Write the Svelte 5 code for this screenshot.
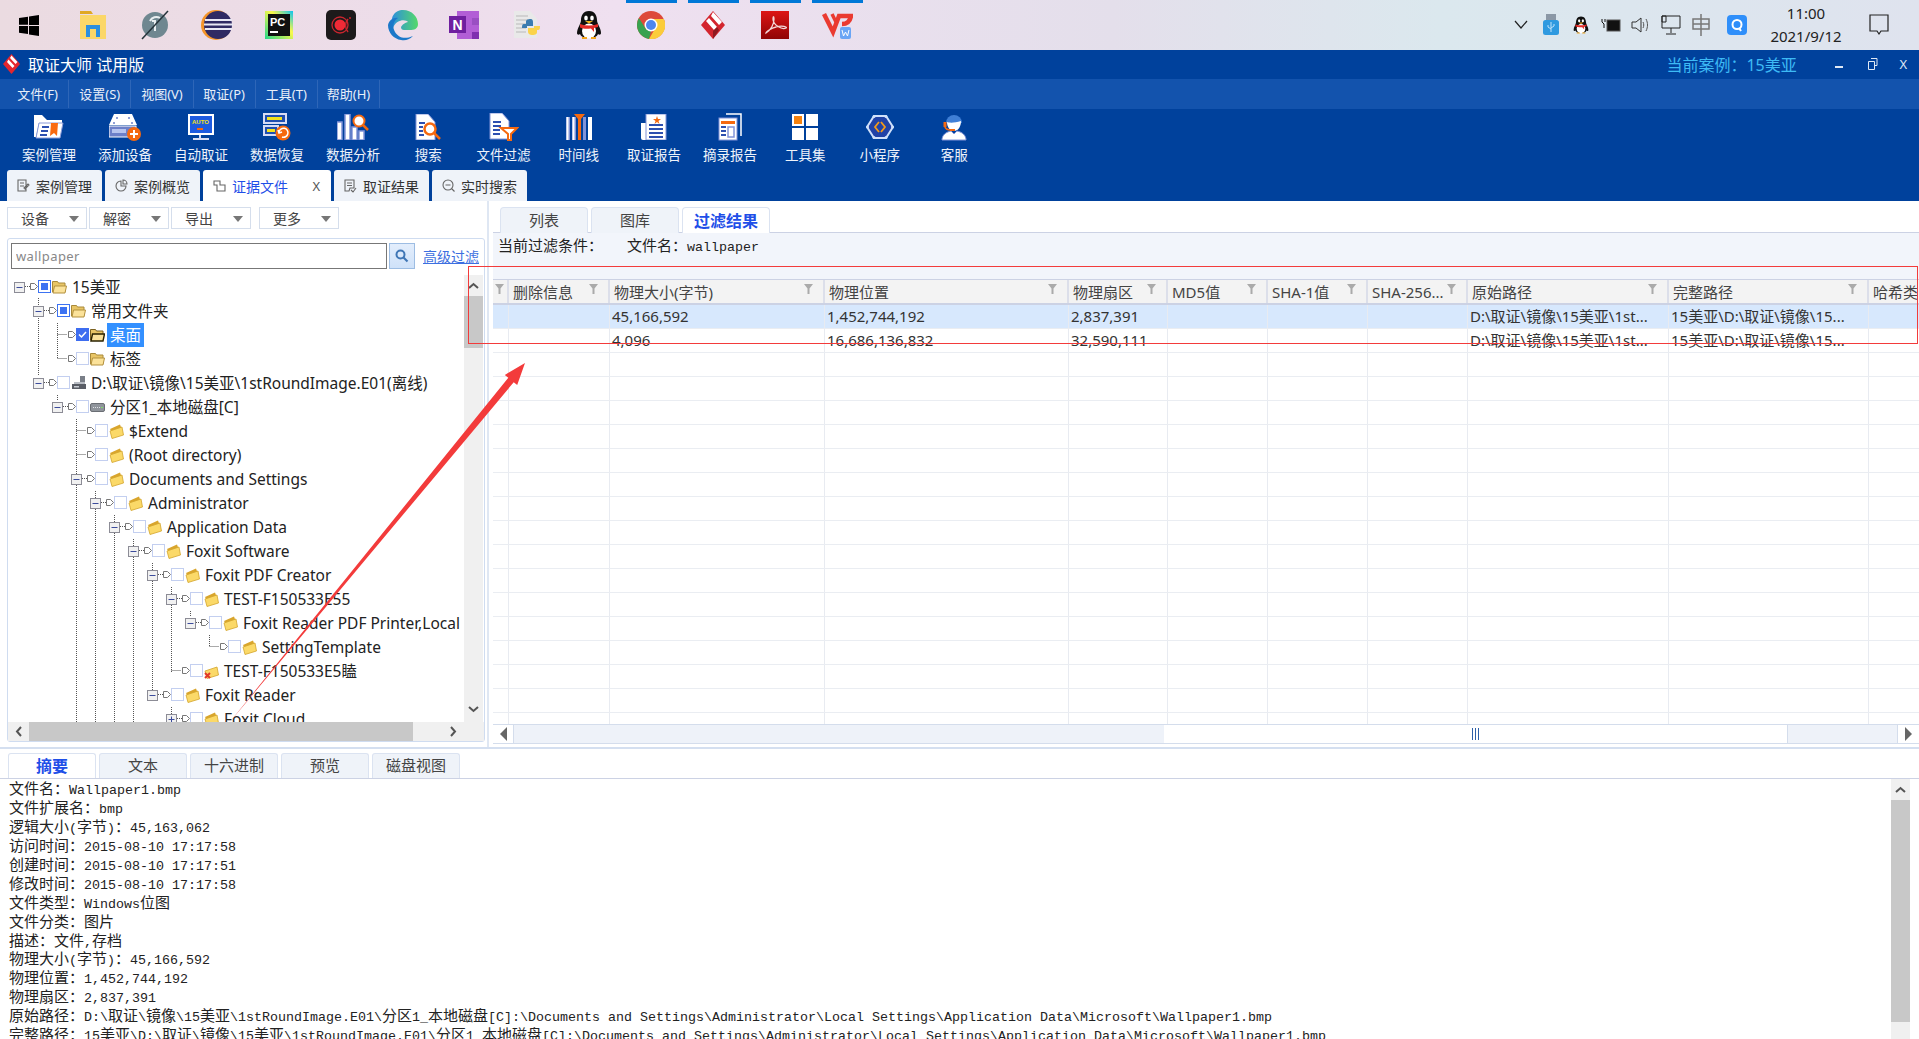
<script>
  const task = [
    { id: 'win' }, { id: 'files' }, { id: 'sync' }, { id: 'eclipse' }, { id: 'pc' }, { id: 'rec' }, { id: 'edge' },
    { id: 'note' }, { id: 'py' }, { id: 'qq' }, { id: 'chrome', run: true }, { id: 'fm', run: true }, { id: 'acro', run: true }, { id: 'wps', run: true }
  ];
  const icons = {
    win: `<svg width="22" height="22" viewBox="0 0 22 22"><path fill="#000" d="M1 4l9-1.300v8H1zM11 2.600L21 1v10H11zM1 12h9v8L1 18.700zM11 12h10v10l-10-1.500z"/></svg>`,
    files: `<svg width="30" height="30" viewBox="0 0 30 30"><path fill="#e0a824" d="M2 1h11l2 3H2z"/><path fill="#fbd768" d="M2 5h26v24H2z"/><path fill="#2b8fe0" d="M8 27V15h14v12h-4v-8h-6v8z"/></svg>`,
    sync: `<svg width="34" height="34" viewBox="0 0 34 34"><circle cx="17" cy="17" r="13" fill="#6f8790"/><path d="M14 13h3v10M12 13a7 7 0 0 1 10-3" fill="none" stroke="#e8eef0" stroke-width="2"/><path d="M4 31L30 3" stroke="#25333a" stroke-width="1.500"/></svg>`,
    eclipse: `<svg width="32" height="32" viewBox="0 0 32 32"><circle cx="15" cy="16" r="15" fill="#f4952a"/><circle cx="17" cy="16" r="14" fill="#2f2a63"/><path d="M4 11h27M3 15.500h29M4 20h27" stroke="#e8e8f4" stroke-width="2"/></svg>`,
    pc: `<svg width="30" height="30" viewBox="0 0 30 30"><defs><linearGradient id="pcg" x1="0" y1="1" x2="1" y2="0"><stop offset="0" stop-color="#21d789"/><stop offset=".6" stop-color="#fcf84a"/><stop offset="1" stop-color="#07c3f2"/></linearGradient></defs><rect width="28" height="28" x="1" y="1" fill="url(#pcg)"/><rect x="4" y="4" width="22" height="22" fill="#111"/><text x="6" y="16" font-family="Liberation Sans" font-size="11" font-weight="700" fill="#fff">PC</text><rect x="6" y="21" width="8" height="2" fill="#fff"/></svg>`,
    rec: `<svg width="30" height="30" viewBox="0 0 30 30"><rect width="30" height="30" rx="5" fill="#1c1a1b"/><circle cx="14" cy="15" r="5.500" fill="#f02a36"/><circle cx="14" cy="15" r="8" fill="none" stroke="#c9252e" stroke-width="1.300"/><path d="M22 9c-3 4-3 9 0 13" fill="none" stroke="#c9252e" stroke-width="1.500"/><circle cx="24" cy="8" r="1" fill="#c9252e"/></svg>`,
    edge: `<svg width="32" height="32" viewBox="0 0 32 32"><defs><linearGradient id="edg" x1="0" y1="0" x2="1" y2="0"><stop offset="0" stop-color="#2d8fdc"/><stop offset="1" stop-color="#55d96a"/></linearGradient></defs><path fill="url(#edg)" d="M16 1c9 0 15 7 15 14 0 5-4 6-8 6h-6c-2 0-3-1-3-3 2-4 7-5 7-5-2-3-12-3-15 6C2 8 8 1 16 1z"/><path fill="#1b78c9" d="M1 16c1-5 6-8 10-7-5 3-6 9-3 14 3 5 9 8 18 4-4 4-8 5-12 4C7 30 1 24 1 16z"/></svg>`,
    note: `<svg width="32" height="30" viewBox="0 0 32 30"><path fill="#b25ed6" d="M8 1h22v28H8z"/><path fill="#9a4fc2" d="M23 8h7v7h-7z"/><path fill="#7f2fb0" d="M23 22h7v7h-7z"/><rect y="6" x="0" width="17" height="17" fill="#6f1f9f"/><text x="3.500" y="20" font-family="Liberation Sans" font-size="14" font-weight="700" fill="#fff">N</text></svg>`,
    py: `<svg width="30" height="30" viewBox="0 0 30 30"><path fill="#e9e9e9" d="M2 1h16l7 8v19H2z"/><path d="M4 6h12M4 10h12M4 14h10M4 18h10M4 22h10" stroke="#c9c9c9" stroke-width="1.500"/><path fill="#3b7cb0" d="M19 9c-4 0-5 1-5 3v2h-2c-2 0-2 2-2 4h5v-2h6v-4c0-2-1-3-2-3z"/><path fill="#fbd34a" d="M20 25c4 0 5-1 5-3v-2h1c2 0 2-2 2-4h-6v2h-6v4c0 2 2 3 4 3z"/></svg>`,
    qq: `<svg width="26" height="30" viewBox="0 0 26 30"><path fill="#101010" d="M13 1c6 0 8 5 8 9 0 4 4 8 4 13 0 2-2 2-3 1-1 3-5 4-9 4s-8-1-9-4c-1 1-3 1-3-1 0-5 4-9 4-13 0-4 2-9 8-9z"/><ellipse cx="13" cy="21" rx="7" ry="7.500" fill="#fff"/><ellipse cx="10" cy="8" rx="1.800" ry="2.500" fill="#fff"/><ellipse cx="16" cy="8" rx="1.800" ry="2.500" fill="#fff"/><path fill="#f2b21c" d="M9 11h8l-4 2.500z"/><path fill="#e32a26" d="M4 14c6 2 12 2 18 0v3l-4 1v4l-3-3.500c-4 .5-8 .5-11-1z"/><path fill="#f2a51c" d="M6 27h5v2H6zM15 27h5v2h-5z"/></svg>`,
    chrome: `<svg width="28" height="28" viewBox="0 0 28 28"><circle cx="14" cy="14" r="14" fill="#dd4a3a"/><path fill="#fbcc3a" d="M14 8h12.800A14 14 0 0 1 12 27.900L19 16z"/><path fill="#38a24f" d="M1.900 7L8.800 18 14 20 12 27.900A14 14 0 0 1 1.900 7z"/><circle cx="14" cy="14" r="6.500" fill="#fff"/><circle cx="14" cy="14" r="5" fill="#4d86ee"/></svg>`,
    fm: `<svg width="26" height="30" viewBox="0 0 26 30"><path fill="#d3252e" d="M13 1l12 14-12 14L1 15z"/><path fill="#fff" d="M13 2l9 10-3 3-8-9zM9 8l8 9-3 3-8-9z"/><path fill="#8e1a20" d="M13 29V21l4-4 2 3z"/></svg>`,
    acro: `<svg width="30" height="30" viewBox="0 0 30 30"><defs><linearGradient id="acg" x1="0" y1="0" x2="0" y2="1"><stop offset="0" stop-color="#dd1515"/><stop offset="1" stop-color="#8f0505"/></linearGradient></defs><rect x="1" y="1" width="28" height="28" fill="url(#acg)"/><path d="M6 23c5-3 8-9 8-14 0-3-1-3-1 0 0 6 9 11 13 9 2-1-4-3-10-1-5 1-10 5-10 6z" fill="none" stroke="#f4d9d9" stroke-width="1.300"/></svg>`,
    wps: `<svg width="32" height="28" viewBox="0 0 32 28"><path fill="none" stroke="#ea3a30" stroke-width="4.500" d="M3 3l9 18 6-16h12c-1 6-5 8-9 8"/><path fill="none" stroke="#ea3a30" stroke-width="3.500" d="M11 3l4 8"/><rect x="19" y="16" width="11" height="12" rx="2" fill="#6aa5f5"/><path d="M21 19l1.500 6 2-4 2 4 1.500-6" fill="none" stroke="#fff" stroke-width="1"/></svg>`,

    case: `<svg width="30" height="26" viewBox="0 0 30 26"><path fill="#fff" d="M0 1h8l5 5h15v3H5L2 23H0z"/><path fill="#fff" stroke="#8a9ad8" d="M5 9h24l-3 15H2z"/><path d="M8 13h7M7 17h7M6 21h7" stroke="#2d4fb0" stroke-width="2"/><path fill="#f96a10" d="M17 9h7l-1 13-3-3-4 3z"/></svg>`,
    add: `<svg width="32" height="28" viewBox="0 0 32 28"><path fill="#fff" d="M5 1h18l5 11H0z"/><circle cx="8" cy="5" r="1" fill="#6d80c8"/><circle cx="20" cy="5" r="1" fill="#6d80c8"/><circle cx="5" cy="10" r="1" fill="#6d80c8"/><circle cx="23" cy="10" r="1" fill="#6d80c8"/><rect x="0" y="13" width="27" height="11" fill="#6d80c8" stroke="#fff"/><rect x="3" y="16" width="14" height="4" fill="#b7c4ee"/><circle cx="25" cy="21" r="7" fill="#f5690f"/><path d="M21 21h8M25 17v8" stroke="#fff" stroke-width="2"/></svg>`,
    auto: `<svg width="28" height="28" viewBox="0 0 28 28"><rect x="1" y="1" width="26" height="21" fill="#fff"/><rect x="3" y="3" width="22" height="17" fill="#1d5be0"/><text x="5" y="11" font-family="Liberation Sans" font-size="6" font-weight="700" fill="#f3e21c">AUTO</text><rect x="10" y="15" width="6" height="2" fill="#f5690f"/><path d="M13 22v3M6 26h16" stroke="#d8def5" stroke-width="2"/></svg>`,
    restore: `<svg width="28" height="28" viewBox="0 0 28 28"><rect x="1" y="1" width="22" height="9" fill="#1f4fb0" stroke="#d6dcf5" stroke-width="2"/><rect x="4" y="4" width="15" height="3" fill="#f3e21c"/><rect x="1" y="13" width="14" height="9" fill="#1f4fb0" stroke="#d6dcf5" stroke-width="2"/><rect x="4" y="16" width="8" height="3" fill="#f3e21c"/><circle cx="20" cy="20" r="7.500" fill="#f5690f"/><path d="M16 19a4.500 4.500 0 1 1 3 5M15 17l1 3 3-1" fill="none" stroke="#fff" stroke-width="1.500"/></svg>`,
    analyze: `<svg width="32" height="26" viewBox="0 0 32 26"><rect x="0" y="8" width="5" height="18" fill="#fff" stroke="#8294d8" stroke-width="1.500"/><rect x="8" y="0" width="5" height="26" fill="#fff" stroke="#8294d8" stroke-width="1.500"/><rect x="15" y="13" width="5" height="13" fill="#fff" stroke="#8294d8" stroke-width="1.500"/><rect x="22" y="17" width="5" height="9" fill="#fff" stroke="#8294d8" stroke-width="1.500"/><circle cx="22" cy="7" r="5.500" fill="#fff" stroke="#f5690f" stroke-width="2"/><path d="M26 11l5 5" stroke="#f5690f" stroke-width="2.500"/></svg>`,
    search: `<svg width="26" height="26" viewBox="0 0 26 26"><path fill="#fff" stroke="#8294d8" d="M1 0h12l7 8v18H1z"/><path d="M4 9h6M4 13h4M4 17h4M4 21h5" stroke="#2d4fb0" stroke-width="2"/><circle cx="15" cy="15" r="5.500" fill="#fff" stroke="#f5690f" stroke-width="2.500"/><path d="M19 19l6 6" stroke="#f5690f" stroke-width="2.500"/></svg>`,
    filter: `<svg width="30" height="28" viewBox="0 0 30 28"><path fill="#fff" stroke="#8294d8" d="M1 0h12l7 8v18H1z"/><path d="M4 9h8M4 13h8M4 17h7M4 21h7" stroke="#2d4fb0" stroke-width="2"/><path fill="#fff" stroke="#f5690f" stroke-width="2" d="M12 15h16l-6 6v6h-3v-6z"/></svg>`,
    time: `<svg width="26" height="26" viewBox="0 0 26 26"><rect x="0" y="3" width="4" height="23" fill="#8294d8"/><rect x="0.500" y="3" width="2" height="23" fill="#fff"/><rect x="6" y="3" width="4" height="23" fill="#8294d8"/><rect x="6.500" y="3" width="2" height="23" fill="#fff"/><rect x="12" y="5" width="3" height="21" fill="#8294d8"/><rect x="17" y="3" width="3" height="23" fill="#8294d8"/><rect x="22" y="3" width="4" height="23" fill="#fff"/><path fill="#f5690f" d="M8 0h11l-4 5v21h-3V5z"/></svg>`,
    report: `<svg width="26" height="26" viewBox="0 0 26 26"><path fill="#fff" d="M0 9h5v17H2a2 2 0 0 1-2-2z"/><rect x="5" y="0" width="20" height="26" fill="#fff" stroke="#8294d8"/><path fill="#f5690f" d="M16 2l1 3h3l-2.500 2 1 3-2.500-2-2.500 2 1-3L12 5h3z"/><path d="M8 11h14M8 15h14M8 19h14M8 23h14" stroke="#2d4fb0" stroke-width="1.800"/></svg>`,
    extract: `<svg width="24" height="28" viewBox="0 0 24 28"><path d="M8 1h15v22" fill="none" stroke="#fff" stroke-width="1.500"/><rect x="1" y="5" width="18" height="22" fill="#fff" stroke="#8294d8"/><rect x="3" y="8" width="14" height="3" fill="#f5690f"/><path d="M3 14h5M3 18h5M3 22h5" stroke="#2d4fb0" stroke-width="2"/><rect x="10" y="14" width="6" height="10" fill="none" stroke="#8294d8" stroke-width="1.500"/></svg>`,
    tools: `<svg width="26" height="26" viewBox="0 0 26 26"><rect x="0" y="0" width="12" height="12" fill="#fff"/><rect x="2" y="2" width="8" height="8" fill="#f5820f"/><rect x="14" y="0" width="12" height="12" fill="#fff"/><rect x="0" y="14" width="12" height="12" fill="#fff"/><rect x="14" y="14" width="12" height="12" fill="#fff"/></svg>`,
    mini: `<svg width="28" height="26" viewBox="0 0 28 26"><path fill="#2142a6" stroke="#cfe0fa" stroke-width="2" d="M8 2h12l7 11-7 11H8L1 13z"/><circle cx="8" cy="2.500" r="1.500" fill="#cfe0fa"/><circle cx="20" cy="2.500" r="1.500" fill="#cfe0fa"/><circle cx="1.500" cy="13" r="1.500" fill="#cfe0fa"/><circle cx="26.500" cy="13" r="1.500" fill="#cfe0fa"/><circle cx="8" cy="23.500" r="1.500" fill="#cfe0fa"/><circle cx="20" cy="23.500" r="1.500" fill="#cfe0fa"/><path d="M13 8l-4 5 4 5M15 8l4 5-4 5" fill="none" stroke="#f59a18" stroke-width="1.800"/></svg>`,
    serv: `<svg width="26" height="28" viewBox="0 0 26 28"><path fill="#3f7fd6" d="M5 10a8 8 0 0 1 16 0z"/><path fill="#fff" d="M6 9c2 1 8 1 14-1 0 6-3 10-7 10s-7-4-7-9z"/><path fill="#fff" stroke="#8294d8" d="M1 27c0-5 4-8 9-9l3 3 3-3c5 1 9 4 9 9z"/><path d="M4 9v5c1 3 4 3 6 3" fill="none" stroke="#f5690f" stroke-width="1.500"/><rect x="2.500" y="9" width="3" height="5" fill="#f5690f"/><rect x="9" y="16" width="5" height="2" fill="#f5690f"/></svg>`
  };

  const menus = ['文件(F)', '设置(S)', '视图(V)', '取证(P)', '工具(T)', '帮助(H)'];
  const tools = [
    ['案例管理', 'case'], ['添加设备', 'add'], ['自动取证', 'auto'], ['数据恢复', 'restore'], ['数据分析', 'analyze'],
    ['搜索', 'search'], ['文件过滤', 'filter'], ['时间线', 'time'], ['取证报告', 'report'], ['摘录报告', 'extract'],
    ['工具集', 'tools'], ['小程序', 'mini'], ['客服', 'serv']
  ];
  const tabs = [
    { t: '案例管理', i: 'M1 1h8v11H1zM3 4h4M3 7h4M7 9l4-4 1 1-4 4z' },
    { t: '案例概览', i: 'M6 2a5 5 0 1 0 5 5H6zM8 1a4 4 0 0 1 4 4H8z' },
    { t: '证据文件', i: 'M1 2h6v4h5v6H4V6H1z', active: true },
    { t: '取证结果', i: 'M1 1h9v8H6l-1 3H1zM3 4h5M3 6.500h5M7 11l2 2 3-4' },
    { t: '实时搜索', i: 'M6 1a5 5 0 1 1 0 10A5 5 0 0 1 6 1zM3.500 6h5M9.500 9.500l3 3' }
  ];

  const tree = [
    { l: 0, t: '15美亚', k: 'open', c: 'part', b: 'minus' },
    { l: 1, t: '常用文件夹', k: 'open', c: 'part', b: 'minus' },
    { l: 2, t: '桌面', k: 'openSel', c: 'on', sel: true },
    { l: 2, t: '标签', k: 'open' },
    { l: 1, t: 'D:\\取证\\镜像\\15美亚\\1stRoundImage.E01(离线)', k: 'drive', b: 'minus' },
    { l: 2, t: '分区1_本地磁盘[C]', k: 'disk', b: 'minus' },
    { l: 3, t: '$Extend', k: 'dir' },
    { l: 3, t: '(Root directory)', k: 'dir' },
    { l: 3, t: 'Documents and Settings', k: 'dir', b: 'minus' },
    { l: 4, t: 'Administrator', k: 'dir', b: 'minus' },
    { l: 5, t: 'Application Data', k: 'dir', b: 'minus' },
    { l: 6, t: 'Foxit Software', k: 'dir', b: 'minus' },
    { l: 7, t: 'Foxit PDF Creator', k: 'dir', b: 'minus' },
    { l: 8, t: 'TEST-F150533E55', k: 'dir', b: 'minus' },
    { l: 9, t: 'Foxit Reader PDF Printer,Local', k: 'dir', b: 'minus' },
    { l: 10, t: 'SettingTemplate', k: 'dir' },
    { l: 8, t: 'TEST-F150533E5瞌', k: 'del' },
    { l: 7, t: 'Foxit Reader', k: 'dir', b: 'minus' },
    { l: 8, t: 'Foxit Cloud', k: 'dir', b: 'plus' }
  ];
  const guides = [
    [38.5, 298, 376], [57.5, 323, 359], [57.5, 395, 400], [76.5, 419, 722], [95.5, 491, 722], [114.5, 515, 722], [133.5, 539, 722],
    [152.5, 563, 690], [171.5, 587, 672], [190.5, 611, 616], [209.5, 635, 647], [171.5, 707, 722]
  ];

  const cols = [
    ['', ''], ['删除信息', '', ''], ['物理大小(字节)', '45,166,592', '4,096'], ['物理位置', '1,452,744,192', '16,686,136,832'],
    ['物理扇区', '2,837,391', '32,590,111'], ['MD5值', '', ''], ['SHA-1值', '', ''], ['SHA-256...', '', ''],
    ['原始路径', 'D:\\取证\\镜像\\15美亚\\1st...', 'D:\\取证\\镜像\\15美亚\\1st...'],
    ['完整路径', '15美亚\\D:\\取证\\镜像\\15...', '15美亚\\D:\\取证\\镜像\\15...'], ['哈希类', '', '']
  ];
  const rowIdx = Array.from({ length: 18 }, (_, i) => i);

  const detail = [
    '文件名：Wallpaper1.bmp', '文件扩展名：bmp', '逻辑大小(字节)：45,163,062', '访问时间：2015-08-10 17:17:58',
    '创建时间：2015-08-10 17:17:51', '修改时间：2015-08-10 17:17:58', '文件类型：Windows位图', '文件分类：图片', '描述：文件,存档',
    '物理大小(字节)：45,166,592', '物理位置：1,452,744,192', '物理扇区：2,837,391',
    '原始路径：D:\\取证\\镜像\\15美亚\\1stRoundImage.E01\\分区1_本地磁盘[C]:\\Documents and Settings\\Administrator\\Local Settings\\Application Data\\Microsoft\\Wallpaper1.bmp',
    '完整路径：15美亚\\D:\\取证\\镜像\\15美亚\\1stRoundImage.E01\\分区1_本地磁盘[C]:\\Documents and Settings\\Administrator\\Local Settings\\Application Data\\Microsoft\\Wallpaper1.bmp'
  ];
  const cjk = /[\u4e00-\u9fff\uff00-\uffef]+/;
  const runs = (s) => s.match(/[\u4e00-\u9fff\uff00-\uffef]+|[^\u4e00-\u9fff\uff00-\uffef]+/g);

  const folder = {
    open: `<svg width="15" height="14" viewBox="0 0 15 14"><path fill="#e8c566" stroke="#a98a3a" d="M.5 12V1.500h5l1 1.500h6.500v9z"/><path fill="#fbe29a" stroke="#b3913f" d="M1 13l1.500-7h12L13 13z"/></svg>`,
    openSel: `<svg width="15" height="14" viewBox="0 0 15 14"><path fill="#e8c566" stroke="#7a6020" d="M.5 12V1.500h5l1 1.500h6.500v9z"/><path fill="#fbe29a" stroke="#2a2200" stroke-width="1.400" d="M1 13l1.500-7h12L13 13z"/></svg>`,
    dir: `<svg width="15" height="15" viewBox="0 0 15 15"><path fill="#d9a52c" d="M1 5l10-4.500 1.500 4-9 5z"/><path fill="#fbd968" stroke="#d3a52c" stroke-width=".8" d="M1 7l12-4 1.500 8L3 14.500z"/></svg>`,
    del: `<svg width="15" height="15" viewBox="0 0 15 15"><path fill="#fbd968" stroke="#d3a52c" stroke-width=".8" d="M1 7l12-4 1.500 8L3 14.500z"/><path d="M1 9l5 5M6 9l-5 5" stroke="#e23a2a" stroke-width="2"/></svg>`,
    drive: `<svg width="16" height="14" viewBox="0 0 16 14"><path fill="#7a7f88" d="M9 0h5v7H9z"/><path fill="#b9bdc4" d="M3 6h11v2H3z"/><path fill="#5a5e66" d="M1 8h14v5H1z"/><rect x="3" y="10" width="5" height="1.500" fill="#c8ccd2"/></svg>`,
    disk: `<svg width="15" height="11" viewBox="0 0 15 11"><rect x=".5" y="1.500" width="14" height="8" rx="1.500" fill="#8f949b" stroke="#6a6e74"/><path d="M3 5.500h7" stroke="#dfe2e6" stroke-dasharray="1 1"/><rect x="11" y="5" width="2" height="1" fill="#7fdc6a"/></svg>`
  };
</script>

<div class="app">
  <div class="taskbar">
    <div class="pins">
      {#each task as p}
        <div class="pin" class:run={p.run}>{@html icons[p.id]}</div>
      {/each}
    </div>
    <div class="tray">
      <svg class="t" width="14" height="10" viewBox="0 0 14 10"><path d="M1 1l6 7 6-7" fill="none" stroke="#222" stroke-width="1.200"/></svg>
      <svg class="t" width="18" height="22" viewBox="0 0 18 22"><rect x="4" y="0" width="10" height="6" fill="#8b98a6"/><rect x="1" y="6" width="16" height="15" rx="2.500" fill="#2f9ae0"/><path d="M9 8v10M6 11v2l3 2M12 10v2l-3 2" fill="none" stroke="#bfe3fb"/></svg>
      <span class="t">{@html icons.qq.replace('width="26" height="30"', 'width="16" height="20"')}</span>
      <svg class="t" width="20" height="14" viewBox="0 0 20 14"><rect x="6" y="2" width="13" height="11" fill="#111" stroke="#555"/><path d="M1 1v3l2 2v4M4 1v3" fill="none" stroke="#111"/></svg>
      <svg class="t" width="20" height="20" viewBox="0 0 20 20"><path d="M1 7h4l5-4v14l-5-4H1z" fill="none" stroke="#333"/><path d="M12 7c1 2 1 4 0 6M15 4c2 4 2 8 0 12" fill="none" stroke="#555"/></svg>
      <svg class="t" width="20" height="20" viewBox="0 0 20 20"><path d="M1 1h18v12H1zM1 1h4v6H1zM10 13v5M5 19h10" fill="none" stroke="#222"/></svg>
      <svg class="t" width="18" height="22" viewBox="0 0 18 22"><path d="M1 5h16v10H1zM9 0v22M1 10h16" fill="none" stroke="#777" stroke-width="1.500"/></svg>
      <svg class="t qb" width="20" height="20" viewBox="0 0 20 20"><rect width="20" height="20" rx="4" fill="#2f8ffa"/><circle cx="10" cy="9.500" r="4.500" fill="none" stroke="#fff" stroke-width="2"/><path d="M12 13l2 3" stroke="#fff" stroke-width="2"/></svg>
      <div class="clock"><span>11:00</span><span>2021/9/12</span></div>
      <svg class="note" width="20" height="22" viewBox="0 0 20 22"><path d="M1 1h18v16h-7l-2 3-2-3H1z" fill="none" stroke="#222" stroke-width="1.200"/></svg>
    </div>
  </div>

  <header class="title">
    <svg class="logo" width="17" height="20" viewBox="0 0 17 20"><path fill="#e4262e" d="M8.500 0L17 10l-8.500 10L0 10z"/><path fill="#fff" d="M8.500 1.500l6 6.500-2 2-5.500-6zM5.500 5.500l6 6.500-2 2-5.500-6z"/></svg>
    <span class="app-name">取证大师 试用版</span>
    <span class="case">当前案例：15美亚</span>
    <span class="wc min"></span>
    <svg class="wc res" width="10" height="12" viewBox="0 0 10 12"><path d="M3 .5h6v7H7M.5 3.500h6v8h-6z" fill="none" stroke="#dfe8f5"/></svg>
    <span class="wc close">X</span>
  </header>

  <nav class="menu">
    {#each menus as m}<span class="mi">{m}</span>{/each}
  </nav>

  <div class="toolbar">
    {#each tools as t}
      <div class="tool" class:short={t[0].length < 4}>
        <div class="ti">{@html icons[t[1]]}</div>
        <span>{t[0]}</span>
      </div>
    {/each}
  </div>

  <div class="tabs">
    {#each tabs as t}
      <div class="tab" class:active={t.active}>
        <svg width="14" height="14" viewBox="0 0 14 14"><path d={t.i} fill="none" stroke="#666" stroke-width="1.100"/></svg>
        <span>{t.t}</span>
        {#if t.active}<b class="x">X</b>{/if}
      </div>
    {/each}
  </div>

  <div class="work">
    <aside class="left">
      <div class="lbtns">
        {#each ['设备', '解密', '导出', '更多'] as b}
          <div class="lbtn"><span>{b}</span><i></i></div>
        {/each}
      </div>
      <div class="tpanel">
        <div class="search">
          <input value="wallpaper" readonly />
          <button aria-label="搜索">
            <svg width="14" height="14" viewBox="0 0 14 14"><circle cx="5.500" cy="5.500" r="4" fill="none" stroke="#3f76b5" stroke-width="2"/><path d="M8.500 8.500l4 4" stroke="#3f76b5" stroke-width="2.200"/></svg>
          </button>
          <a href="#top">高级过滤</a>
        </div>
        <div class="tgrid">
          <div class="tree">
            <svg class="guides" width="456" height="447" viewBox="8 275 456 447">
              {#each guides as g}
                <path d="M{g[0]} {g[1]}V{g[2]}" stroke="#555" stroke-dasharray="1 1" fill="none" />
              {/each}
            </svg>
            {#each tree as r}
              <div class="row" style="padding-left:{14 + 19 * r.l}px">
                <svg class="conn" width="25" height="24" viewBox="0 0 25 24">
                  {#if r.b}
                    <rect x="0.500" y="7.500" width="10" height="10" fill="#f1f1f1" stroke="#8c8c96" />
                    <path d="M2.500 12.500h6" stroke="#3c4c9c" />
                    {#if r.b === 'plus'}<path d="M5.500 9.500v6" stroke="#3c4c9c" />{/if}
                    <path d="M11 11.500h5" stroke="#555" stroke-dasharray="1 1" />
                  {:else}
                    <path d="M5.500 11.500h10" stroke="#555" stroke-dasharray="1 1" />
                  {/if}
                  <path d="M16.500 8.500h4l3 3-3 3h-4z" fill="#fff" stroke="#777" />
                </svg>
                <span class="cb {r.c || ''}">
                  {#if r.c === 'on'}<svg width="11" height="11" viewBox="0 0 11 11"><path d="M2 5.500l2.500 2.500 4.500-5" fill="none" stroke="#fff" stroke-width="1.500" /></svg>{/if}
                </span>
                <span class="fo">{@html folder[r.k]}</span>
                <span class="lb" class:sel={r.sel}>{r.t}</span>
              </div>
            {/each}
          </div>
          <div class="vbar">
            <svg width="19" height="20" viewBox="0 0 19 20"><path d="M5 13l4.500-4 4.500 4" fill="none" stroke="#555" stroke-width="2" /></svg>
            <div class="vthumb"></div>
            <svg class="dn" width="19" height="20" viewBox="0 0 19 20"><path d="M5 7l4.500 4 4.500-4" fill="none" stroke="#555" stroke-width="2" /></svg>
          </div>
        </div>
        <div class="hbar">
          <svg width="21" height="19" viewBox="0 0 21 19"><path d="M13 5l-4 4.500 4 4.500" fill="none" stroke="#555" stroke-width="2" /></svg>
          <div class="hthumb"></div>
          <svg class="rt" width="30" height="19" viewBox="0 0 30 19"><path d="M17 5l4 4.500-4 4.500" fill="none" stroke="#555" stroke-width="2" /></svg>
        </div>
      </div>
    </aside>

    <section class="right">
      <div class="rtabs">
        <div class="rtab">列表</div>
        <div class="rtab">图库</div>
        <div class="rtab active">过滤结果</div>
      </div>
      <div class="fbar">
        <span class="song cjk">当前过滤条件：</span>
        <span class="fname"><span class="song cjk">文件名：</span><span class="song lat">wallpaper</span></span>
      </div>
      <div class="table">
        <div class="trow head">
          {#each cols as c}
            <div class="th">
              <span>{c[0]}</span>
              <svg width="9" height="10" viewBox="0 0 9 10"><path d="M0 0h9L5.500 4.500V10h-2V4.500z" fill="#aaa" /></svg>
            </div>
          {/each}
        </div>
        {#each rowIdx as r}
          <div class="trow" class:hl={r === 0}>
            {#each cols as c}
              <div class="td">{c[r + 1] || ''}</div>
            {/each}
          </div>
        {/each}
      </div>
      <div class="tscroll">
        <div class="sbtn"><svg width="8" height="14" viewBox="0 0 8 14"><path d="M8 0v14L1 7z" fill="#666" /></svg></div>
        <div class="strack first"></div>
        <div class="sthumb"><i></i></div>
        <div class="strack"></div>
        <div class="sbtn"><svg width="8" height="14" viewBox="0 0 8 14"><path d="M0 0v14l7-7z" fill="#666" /></svg></div>
      </div>
    </section>
  </div>

  <div class="split"></div>

  <div class="btabs">
    {#each ['摘要', '文本', '十六进制', '预览', '磁盘视图'] as t, i}
      <div class="btab" class:active={i === 0}>{t}</div>
    {/each}
  </div>

  <div class="detail">
    <div class="dtext">
      {#each detail as d}
        <div class="dl">{#each runs(d) as r}<span class="song" class:cjk={cjk.test(r)} class:lat={!cjk.test(r)}>{r}</span>{/each}</div>
      {/each}
    </div>
    <div class="dbar">
      <svg width="19" height="21" viewBox="0 0 19 21"><path d="M5 13l4.500-4 4.500 4" fill="none" stroke="#555" stroke-width="2" /></svg>
      <div class="dthumb"></div>
    </div>
  </div>

  <svg class="overlay" width="1919" height="1039" viewBox="0 0 1919 1039">
    <rect x="468.500" y="266.500" width="1449" height="77" fill="none" stroke="#f33b3b" />
    <polygon points="229,723 513.700,382.200 517.200,385.100 525,363 504.800,374.900 508.300,377.800" fill="#f33b3b" />
  </svg>
</div>

<style>
  :global(body) { margin: 0; background: #fff; }
  .app {
    position: relative; width: 1919px; height: 1039px; overflow: hidden; display: flex; flex-direction: column;
    font-family: "Noto Sans", "Noto Sans CJK SC", sans-serif; color: #333; background: #fff;
  }
  .taskbar {
    height: 50px; flex: none; display: flex; justify-content: space-between;
    background: linear-gradient(90deg, #ebdbe1 0%, #edddea 22%, #efe0f0 32%, #e4dfeb 58%, #dbe8ee 75%, #dce6ee 85%, #dfe3ee 100%);
  }
  .pins { display: flex; }
  .pin { position: relative; width: 62px; height: 50px; display: flex; align-items: center; justify-content: center; box-sizing: border-box; }
  .pin:first-child { padding-right: 4px; }
  .pin.run::before { content: ""; position: absolute; top: 0; left: 5.500px; width: 51px; height: 3px; background: #0078d7; }
  .tray { position: relative; display: flex; align-items: center; padding-right: 30px; }
  .t { display: flex; justify-content: center; width: 30px; flex: none; }
  .qb { margin: 0 9px 0 6px; }
  .clock { width: 90px; display: flex; flex-direction: column; align-items: center; font-size: 15px; line-height: 23px; color: #222; margin-right: 18px; }

  .title { height: 29px; flex: none; background: #00419c; color: #fff; display: flex; align-items: center; padding-bottom: 2px; box-sizing: border-box; }
  .logo { margin-left: 3px; }
  .app-name { margin-left: 8px; font-size: 16px; }
  .case { margin-left: auto; color: #3dbaf5; font-size: 16px; width: 169px; white-space: nowrap; }
  .wc { display: block; color: #dfe8f5; }
  .min { width: 8px; height: 2px; background: #dfe8f5; margin-right: 25px; margin-top: 6px; }
  .res { margin-right: 21px; }
  .close { font-size: 13px; margin-right: 12px; }

  .menu { height: 30px; flex: none; background: #1353ad; display: flex; padding: 0 0 0 7px; align-items: center; box-sizing: border-box; }
  .mi { width: 61.200px; height: 26px; padding-bottom: 2px; border-right: 1px solid #2e66b8; display: flex; align-items: center; justify-content: center; font-size: 13px; color: #e8eff9; box-sizing: content-box; }

  .toolbar { height: 61px; flex: none; background: #00419c; display: flex; padding-left: 11px; box-sizing: border-box; }
  .tool { width: 76px; display: flex; flex-direction: column; align-items: center; color: #eef3fb; font-size: 13.500px; }
  .tool.short { width: 74.500px; }
  .ti { height: 30px; margin-top: 3px; display: flex; align-items: center; justify-content: center; }
  .tool span { line-height: 20px; margin-top: 3px; white-space: nowrap; }

  .tabs { height: 31px; flex: none; background: #00419c; display: flex; gap: 3px; padding-left: 7px; align-items: flex-end; }
  .tab { width: 95px; height: 31px; box-sizing: border-box; background: #eff3f9; border-radius: 3px 3px 0 0; display: flex; align-items: center; padding-left: 10px; gap: 5px; font-size: 14px; color: #333; white-space: nowrap; }
  .tab.active { width: 128px; background: #fff; color: #1f4fe8; position: relative; }
  .x { position: absolute; right: 11px; font-weight: 400; color: #555; font-size: 13px; }

  .work { height: 546px; flex: none; display: flex; }
  .left { width: 489px; flex: none; box-sizing: border-box; padding: 6px 0 0 7px; border-right: 2px solid #dfe7f3; }
  .lbtns { display: flex; gap: 2px; height: 22px; }
  .lbtn { width: 80px; box-sizing: border-box; border: 1px solid #d5deec; display: flex; align-items: center; position: relative; font-size: 14px; color: #444; }
  .lbtn:last-child { margin-left: 6px; }
  .lbtn span { margin-left: 13px; }
  .lbtn i { position: absolute; right: 7px; top: 8px; border: 5.500px solid transparent; border-top: 6px solid #777; border-bottom: 0; }
  .tpanel { margin-top: 9px; width: 478px; height: 504px; box-sizing: border-box; border: 1px solid #cfdcf0; border-radius: 3px; display: flex; flex-direction: column; }
  .search { height: 36px; flex: none; display: flex; padding: 4px 0 0 3px; box-sizing: border-box; }
  input { width: 376px; height: 26px; box-sizing: border-box; border: 1px solid #777; padding: 0 4px; font: 13px "Noto Sans", sans-serif; color: #888; letter-spacing: .4px; outline: none; }
  button { width: 26px; height: 26px; margin-left: 2px; padding: 0; border: 1px solid #9dbde3; background: linear-gradient(#e3eefc, #cfe2f9); display: flex; align-items: center; justify-content: center; }
  a { margin-left: 8px; font-size: 14px; line-height: 27px; color: #3d6fe0; }
  .tgrid { flex: 1; display: flex; min-height: 0; }
  .tree { position: relative; width: 456px; flex: none; overflow: hidden; }
  .guides { position: absolute; left: 0; top: 0; pointer-events: none; }
  .row { position: relative; height: 24px; display: flex; align-items: center; white-space: nowrap; box-sizing: border-box; margin-left: -8px; }
  .conn { flex: none; }
  .cb { width: 11px; height: 11px; flex: none; border: 1px solid #c3cff0; background: #fff; box-sizing: content-box; margin-left: -1px; margin-top: -1px; position: relative; }
  .cb.part::after { content: ""; position: absolute; inset: 2px; background: #3d73f2; }
  .cb.part { border-color: #3d73f2; }
  .cb.on { background: #3d6df0; border-color: #3d6df0; }
  .cb svg { display: block; }
  .fo { width: 16px; height: 15px; margin-left: 1px; display: flex; align-items: center; flex: none; }
  .lb { margin-left: 4px; font-size: 15.500px; line-height: 24px; color: #222; }
  .lb.sel { background: #3390ff; color: #fff; padding: 0 3px; margin-left: 1px; }
  .vbar { width: 19px; flex: none; background: #f0f0f0; position: relative; }
  .vbar svg { display: block; }
  .dn { position: absolute; bottom: 2px; left: 0; }
  .vthumb { height: 52px; margin-top: 1px; background: #c8c8c8; }
  .hbar { height: 19px; flex: none; background: #f0f0f0; display: flex; }
  .hthumb { width: 384px; background: #c8c8c8; }
  .hbar svg { flex: none; }
  .rt { margin-left: 21px; }

  .right { flex: 1; min-width: 0; padding: 6px 0 0 4px; box-sizing: border-box; display: flex; flex-direction: column; }
  .rtabs { height: 26px; flex: none; display: flex; gap: 3px; padding-left: 7px; border-bottom: 1px solid #ccd2e4; box-sizing: border-box; }
  .rtab { width: 88px; height: 26px; padding-bottom: 2px; box-sizing: border-box; background: #eff3f9; border: 1px solid #dbe3f1; border-bottom: 0; border-radius: 4px 4px 0 0; display: flex; align-items: center; justify-content: center; font-size: 15px; color: #444; }
  .rtab.active { background: #fff; color: #1f4fe8; font-size: 16px; font-weight: 700; }
  .fbar { height: 46px; flex: none; background: #f2f5fb; padding: 2px 0 0 5px; box-sizing: border-box; display: flex; line-height: 20px; color: #222; }
  .fname { margin-left: 24px; }
  .song.cjk { font-size: 15px; }
  .song.lat { font-family: "Liberation Mono", "Noto Sans CJK SC", monospace; font-size: 13.330px; }
  .table { height: 445px; flex: none; overflow: hidden; background: #fff; }
  .trow { display: grid; grid-template-columns: 16px 101px 215px 244px 99px 100px 100px 100px 201px 200px 60px; height: 24px; border-bottom: 1px solid #eaedf2; box-sizing: border-box; }
  .trow.head { height: 26px; background: #f3f3f3; border-top: 1px solid #ccd2e4; border-bottom: 2px solid #ccd2e4; }
  .trow.hl { background: #d7e8fd; }
  .th, .td { border-right: 1px solid #e8ebf1; min-width: 0; overflow: hidden; white-space: nowrap; font-size: 15px; color: #333; box-sizing: border-box; }
  .td { padding-left: 2px; line-height: 23px; }
  .th { display: flex; align-items: center; justify-content: space-between; padding: 0 10px 0 4px; border-right: 2px solid #dcdfea; color: #444; }
  .th svg { flex: none; margin-top: -6px; }
  .th:first-child { padding: 0 0 0 2px; }
  .th:first-child svg { margin-right: 4px; }
  .th:last-child svg { display: none; }
  .tscroll { height: 20px; flex: none; display: flex; border-top: 1px solid #d4ddec; border-bottom: 1px solid #d4ddec; box-sizing: border-box; }
  .sbtn { width: 20px; display: flex; align-items: center; justify-content: center; background: #fff; border-right: 1px solid #d4ddec; }
  .sbtn:last-child { border-right: 0; border-left: 1px solid #d4ddec; width: 21px; }
  .strack { width: 109px; background: #eef2f9; }
  .strack.first { width: 650px; }
  .sthumb { width: 625px; background: #fff; border-right: 1px solid #d4ddec; box-sizing: border-box; display: flex; align-items: center; justify-content: center; }
  .sthumb i { width: 7px; height: 12px; box-sizing: border-box; border-left: 1px solid #2d5fa8; border-right: 1px solid #2d5fa8; position: relative; }
  .sthumb i::after { content: ""; position: absolute; left: 2px; top: 0; width: 1px; height: 12px; background: #2d5fa8; }

  .split { height: 6px; flex: none; box-sizing: border-box; border-top: 2px solid #d4dff0; }
  .btabs { height: 26px; flex: none; display: flex; gap: 3px; padding-left: 8px; border-bottom: 1px solid #ccd2e4; box-sizing: border-box; }
  .btab { width: 88px; height: 25px; padding-bottom: 3px; box-sizing: border-box; background: #eff3f9; border: 1px solid #dbe3f1; border-bottom: 0; border-radius: 3px 3px 0 0; display: flex; align-items: center; justify-content: center; font-size: 15px; color: #444; }
  .btab.active { background: #fff; color: #1f4fe8; font-size: 16px; font-weight: 700; }
  .detail { flex: 1; min-height: 0; display: flex; overflow: hidden; }
  .dtext { width: 1891px; flex: none; padding: 0 0 0 9px; box-sizing: border-box; }
  .dl { height: 18.950px; line-height: 19px; white-space: nowrap; color: #222; }
  .dbar { width: 19px; background: #f0f0f0; }
  .dbar svg { display: block; }
  .dthumb { height: 222px; background: #c8c8c8; }
  .overlay { position: absolute; left: 0; top: 0; pointer-events: none; }
</style>
